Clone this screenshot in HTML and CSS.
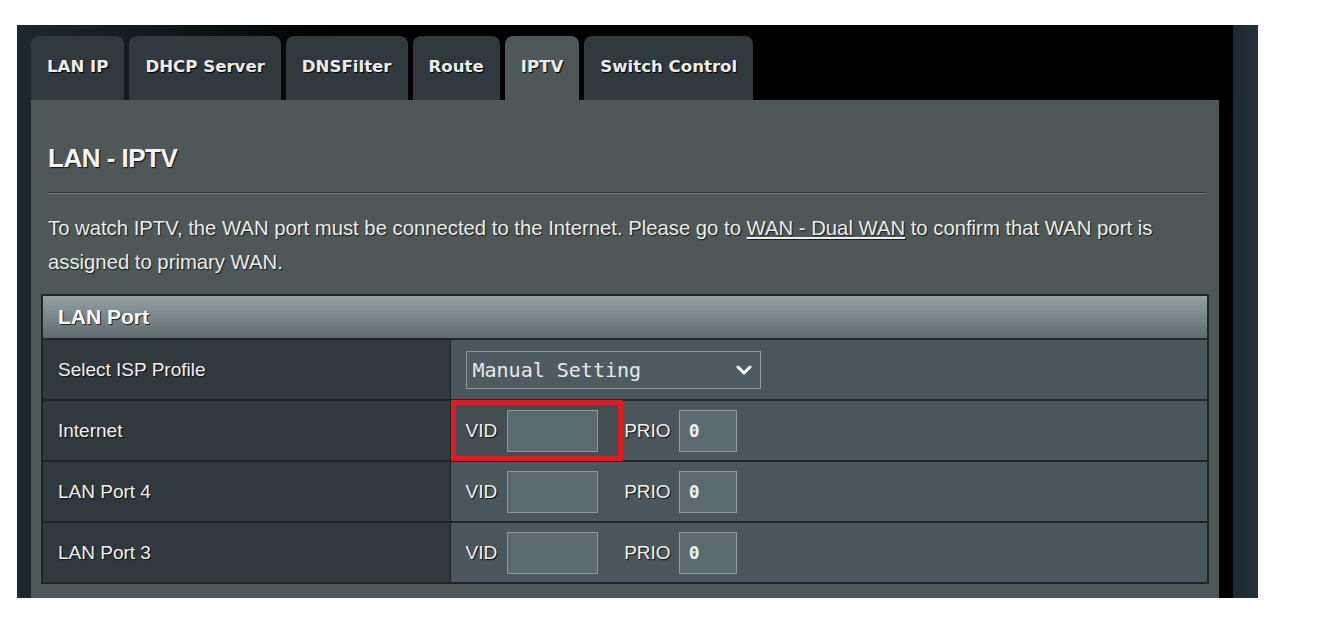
FILE: index.html
```html
<!DOCTYPE html>
<html>
<head>
	<meta charset="utf-8">
	<meta name="viewport" content="width=device-width, initial-scale=1">
	<title>LAN - IPTV</title>
	<link rel="stylesheet" href="styles.css">
</head>
<body>
	<div class="frame">
		<div class="main">
			<!-- Tabs -->
			<div class="tabs">
				<div class="tab">LAN IP</div>
				<div class="tab">DHCP Server</div>
				<div class="tab">DNSFilter</div>
				<div class="tab">Route</div>
				<div class="tab active">IPTV</div>
				<div class="tab">Switch Control</div>
			</div>

			<div class="panel">
				<div class="intro">
					<h2>LAN - IPTV</h2>
					<hr class="rule">
					<p><span>To watch IPTV, the WAN port must be connected to the Internet. Please go to</span> <a href="#">WAN - Dual WAN</a> <span>to confirm that WAN port is assigned to primary WAN.</span></p>
				</div>

				<table class="settings">
					<tr>
						<th colspan="2">LAN Port</th>
					</tr>
					<tr>
						<td class="label">Select ISP Profile</td>
						<td class="value">
							<div class="select-wrap">
								<select class="select">
									<option>Manual Setting</option>
								</select>
								<svg class="chevron" width="16" height="10" viewBox="0 0 16 10">
									<path d="M2 2 L8 8 L14 2" fill="none" stroke="#fff" stroke-width="3" stroke-linecap="round" stroke-linejoin="round"/>
								</svg>
							</div>
						</td>
					</tr>
					<tr>
						<td class="label">Internet</td>
						<td class="value">
							<div class="mark"></div>
							<div class="fields">
								<span class="field-name">VID</span>
								<input class="vid" type="text">
								<span class="field-name prio">PRIO</span>
								<input class="pri" type="text" value="0">
							</div>
						</td>
					</tr>
					<tr>
						<td class="label">LAN Port 4</td>
						<td class="value">
							<div class="fields">
								<span class="field-name">VID</span>
								<input class="vid" type="text">
								<span class="field-name prio">PRIO</span>
								<input class="pri" type="text" value="0">
							</div>
						</td>
					</tr>
					<tr>
						<td class="label">LAN Port 3</td>
						<td class="value">
							<div class="fields">
								<span class="field-name">VID</span>
								<input class="vid" type="text">
								<span class="field-name prio">PRIO</span>
								<input class="pri" type="text" value="0">
							</div>
						</td>
					</tr>
				</table>
			</div>
		</div>
		<div class="side"></div>
	</div>
</body>
</html>
```

FILE: styles.css
```css
/* General Reset */
* {
	box-sizing: border-box;
	margin: 0;
	padding: 0;
}

body {
	background: white;
	font-family: "Liberation Sans", Arial, sans-serif;
	overflow: hidden;
}

/* Outer frame */
.frame {
	display: flex;
	width: 1241px;
	height: 573px;
	margin: 25px 0 0 17px;
	background: linear-gradient(90deg, #1a2a2e 0, #121c1f 120px, #000 320px);
	overflow: hidden;
}

.main {
	width: 1216px;
	padding: 11px 14px 0 14px;
	display: flex;
	flex-direction: column;
}

.side {
	width: 25px;
	background: linear-gradient(90deg, #1c282e, #24333b);
}

/* Tabs */
.tabs {
	display: flex;
	gap: 5px;
	height: 64px;
}

.tab {
	display: flex;
	align-items: center;
	padding: 0 16px 3px;
	background: #30393d;
	border-radius: 8px 8px 0 0;
	color: #ececec;
	font-family: "DejaVu Sans", Verdana, sans-serif;
	font-weight: bold;
	font-size: 16.6px;
	text-shadow: 1px 1px 1px #000;
}

.tab.active {
	background: #4e5858;
}

/* Panel */
.panel {
	flex: 1;
	background: #4e5858;
	padding: 0 10px;
}

.intro {
	margin: 0 4px 0 7px;
}

h2 {
	margin-top: 43px;
	font-size: 26px;
	line-height: 30px;
	font-weight: bold;
	letter-spacing: -0.5px;
	color: #f4f4f4;
	text-shadow: 1px 1px 1px #111;
}

.rule {
	margin-top: 19px;
	height: 0;
	border: none;
	border-top: 1px solid #2c3537;
	border-bottom: 1px solid #76807f;
}

p {
	margin-top: 17px;
	font-size: 20.3px;
	line-height: 34px;
	color: #e8ecec;
	text-shadow: 1px 1px 1px #1b1b1b;
}

p a {
	color: #e8ecec;
}

/* Settings table */
.settings {
	width: 100%;
	margin-top: 15px;
	border-collapse: collapse;
	border: 2px solid #1e2629;
}

.settings th {
	height: 44px;
	padding-left: 15px;
	text-align: left;
	font-size: 21px;
	color: #fafafa;
	background: linear-gradient(#93a1a4, #5e6c70);
	text-shadow: 1px 1px 1px #222;
	border-bottom: 2px solid #1e2629;
}

.settings td {
	height: 61px;
	border-top: 2px solid #1e2629;
	font-size: 19px;
	color: #eef0f0;
	text-shadow: 1px 1px 1px #111;
}

.label {
	width: 408px;
	padding-left: 15px;
	background: #30393d;
	border-right: 1px solid #1e2629;
}

.value {
	position: relative;
	padding-left: 15px;
	background: #4a575c;
}

/* Select */
.select-wrap {
	position: relative;
	width: 295px;
}

.select {
	appearance: none;
	-webkit-appearance: none;
	width: 295px;
	height: 38px;
	padding-left: 6px;
	background: #4e5c61;
	border: 1px solid #8a989b;
	border-radius: 0;
	color: #e8e8e8;
	font-family: "DejaVu Sans Mono", monospace;
	font-size: 20px;
	outline: none;
}

.chevron {
	position: absolute;
	right: 9px;
	top: 14px;
}

/* VID / PRIO fields */
.fields {
	position: relative;
	display: flex;
	align-items: center;
}

.field-name {
	margin-right: 10px;
}

.field-name.prio {
	margin-left: 26px;
	margin-right: 8px;
}

input {
	height: 42px;
	padding-left: 9px;
	background: #5a6a6e;
	border: 1px solid #8b999c;
	border-radius: 0;
	color: #eef0f0;
	font-family: "DejaVu Sans Mono", monospace;
	font-size: 18px;
	font-weight: bold;
	outline: none;
}

.vid {
	width: 91px;
}

.pri {
	width: 58px;
}

/* Red highlight drawn over the Internet row */
.mark {
	position: absolute;
	left: 0;
	top: -1px;
	width: 172px;
	height: 61px;
	border: 5px solid #dd1c24;
	background: rgba(0, 0, 0, 0.1);
	pointer-events: none;
}
```
